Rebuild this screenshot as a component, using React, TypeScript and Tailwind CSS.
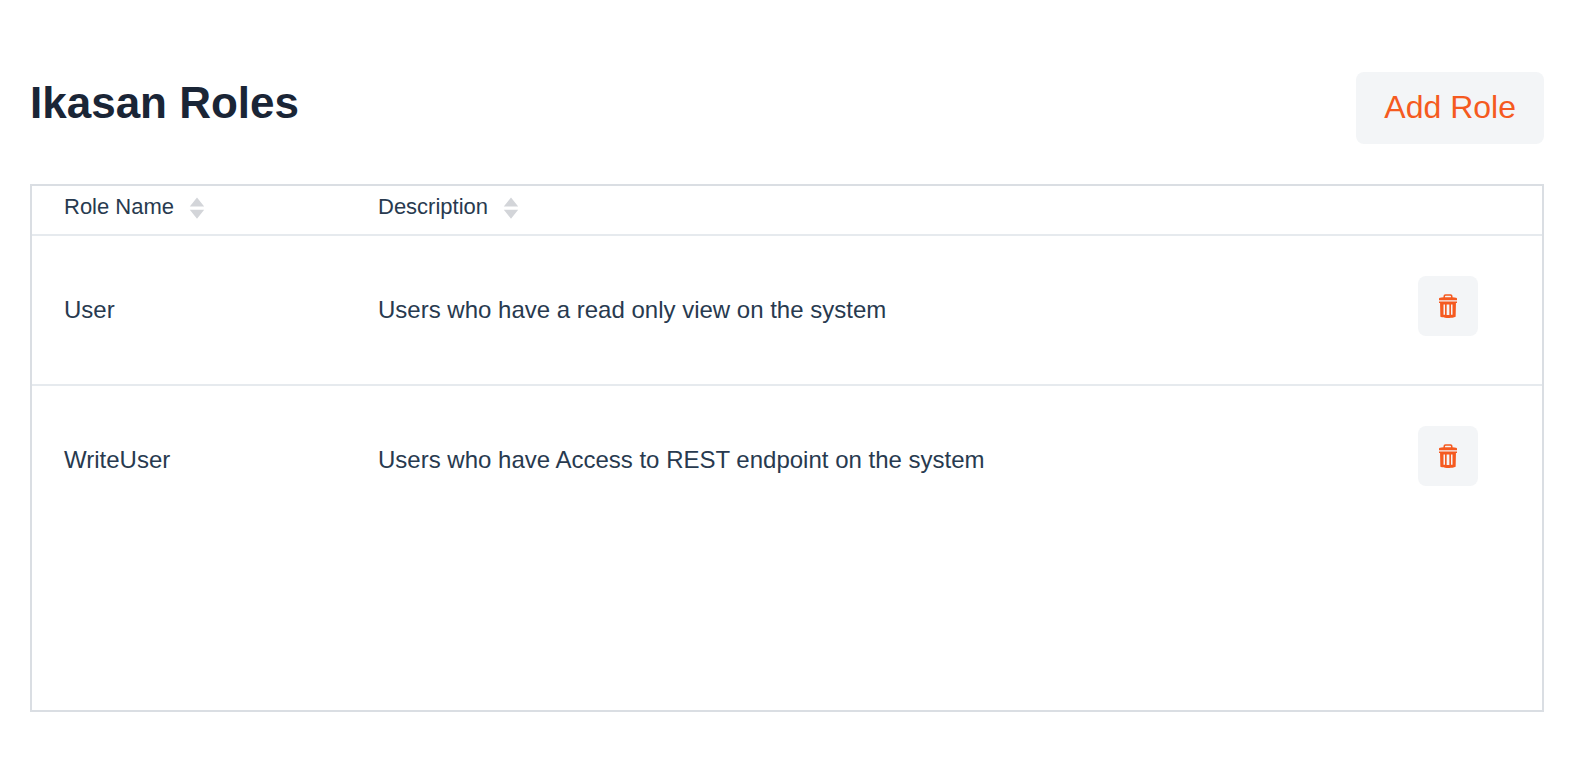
const roles = [
  { name: "User", description: "Users who have a read only view on the system" },
  { name: "WriteUser", description: "Users who have Access to REST endpoint on the system" },
];

function TrashIcon() {
  return (
    <svg viewBox="0 0 16 16" className="size-6 fill-current" aria-hidden="true">
      <path
        fillRule="evenodd"
        d="M14 3.1c0-.5-.9-.7-3-.9v-.8A1.3 1.3 0 0 0 9.7.1H6.3A1.3 1.3 0 0 0 5 1.400v.8c-2.100.2-3 .4-3 .9v1h12v-1zM6 1.600c0-.3.2-.5.5-.5h3c.3 0 .5.2.5.5v.5H6v-.5z"
      />
      <path
        fillRule="evenodd"
        d="M2 5v1h.7l.2 9.200c1.300.5 2.700.8 4.300.8h1.600c1.600 0 3-.3 4.300-.8L13.300 6h.7V5H2zm4 8.900-1-.1V7h1v6.900zM8.900 14H7.100V7h1.800v7zm2.100-.2-1 .1V7h1v6.800z"
      />
    </svg>
  );
}

function SortHeader({ label }: { label: string }) {
  return (
    <button type="button" className="flex items-center gap-[15px] leading-[42px]">
      {label}
      <svg viewBox="0 0 16 24" className="mt-0.5 h-6 w-4 fill-[#d3d5d9]" aria-hidden="true">
        <path d="M8 1.5 15.2 10.5H.8zM.8 13.8h14.4L8 22.8z" />
      </svg>
    </button>
  );
}

export default function App() {
  return (
    <main className="bg-white pt-[72px] pr-[42px] pb-[46px] pl-[30px] font-['Liberation_Sans',Arial,sans-serif] text-[#283a4f]">
      <header className="mb-10 flex items-start justify-between">
        <h1 className="text-[44px] leading-[62px] font-bold text-[#1a2536]">Ikasan Roles</h1>
        <button type="button" className="h-[72px] rounded-lg bg-[#f3f5f7] px-7 pb-0.5 text-[32px] text-[#f55a20]">
          Add Role
        </button>
      </header>

      <section className="min-h-[528px] border-2 border-[#dadee3]">
        <table className="w-full table-fixed border-separate border-spacing-0 text-left">
          <colgroup>
            <col className="w-[314px]" />
            <col />
            <col className="w-[130px]" />
          </colgroup>
          <thead className="text-[22px]">
            <tr>
              <th scope="col" className="h-[50px] border-b-2 border-[#e6eaee] px-8 align-top font-normal">
                <SortHeader label="Role Name" />
              </th>
              <th scope="col" className="border-b-2 border-[#e6eaee] px-8 align-top font-normal">
                <SortHeader label="Description" />
              </th>
              <td className="border-b-2 border-[#e6eaee]" />
            </tr>
          </thead>
          <tbody className="text-2xl [&>tr:not(:last-child)>td]:border-b-2 [&>tr:not(:last-child)>td]:border-[#e6eaee]">
            {roles.map((role) => (
              <tr key={role.name} className="h-[150px] last:h-[148px]">
                <td className="px-8">{role.name}</td>
                <td className="px-8">{role.description}</td>
                <td className="pt-10 pl-1.5 align-top">
                  <button
                    type="button"
                    aria-label={"Delete " + role.name}
                    className="flex size-[60px] items-center justify-center rounded-lg bg-[#f3f5f7] text-[#f55a20]"
                  >
                    <TrashIcon />
                  </button>
                </td>
              </tr>
            ))}
          </tbody>
        </table>
      </section>
    </main>
  );
}
